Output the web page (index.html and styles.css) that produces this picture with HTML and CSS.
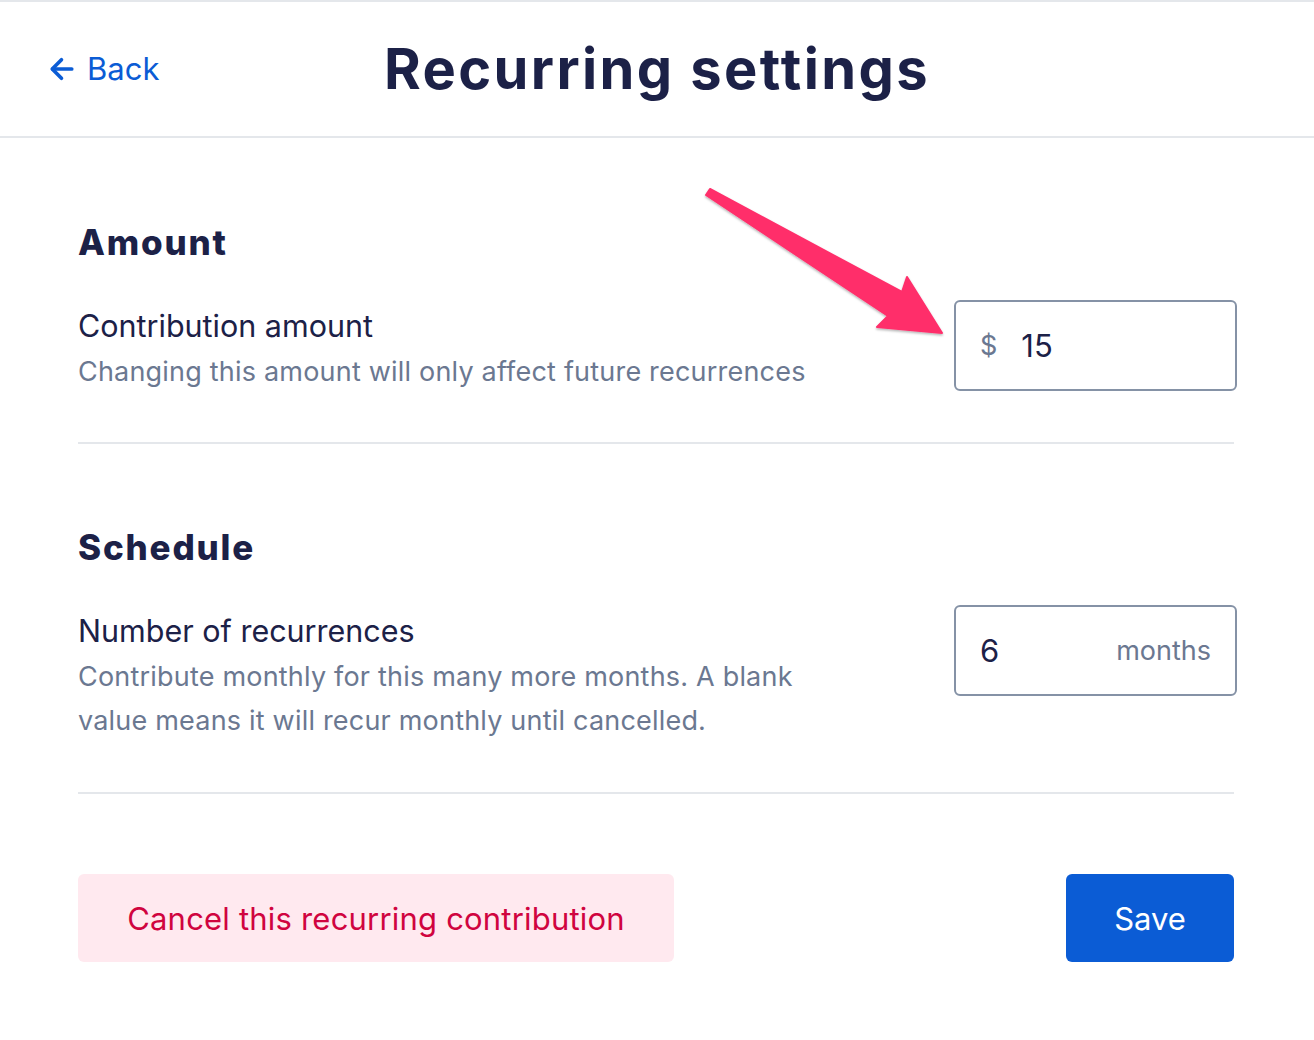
FILE: index.html
```html
<!DOCTYPE html>
<html lang="en">
<head>
  <meta charset="UTF-8">
  <meta name="viewport" content="width=device-width, initial-scale=1.0">
  <title>Recurring settings</title>
  <link rel="stylesheet" href="styles.css">
</head>
<body>
  <header class="topbar">
    <a class="back" href="#">
      <svg class="back-icon" width="26" height="26" viewBox="0 0 24 24" fill="none" stroke="currentColor" stroke-width="3.4" stroke-linecap="round" stroke-linejoin="round">
        <path d="M21 12H3.5"/>
        <path d="M11.5 3.5L3 12l8.5 8.5"/>
      </svg>
      Back
    </a>
    <h1 class="page-title">Recurring settings</h1>
  </header>

  <main class="content">
    <section class="section">
      <h2 class="section-title">Amount</h2>
      <div class="row">
        <div class="row-text">
          <div class="row-label">Contribution amount</div>
          <div class="row-help">Changing this amount will only affect future recurrences</div>
        </div>
        <div class="field">
          <span class="prefix">$</span>
          <input class="field-input" type="text" value="15">
        </div>
      </div>
    </section>

    <section class="section">
      <h2 class="section-title">Schedule</h2>
      <div class="row">
        <div class="row-text row-text-narrow">
          <div class="row-label">Number of recurrences</div>
          <div class="row-help">Contribute monthly for this many more months. A blank value means it will recur monthly until cancelled.</div>
        </div>
        <div class="field">
          <input class="field-input" type="text" value="6">
          <span class="suffix">months</span>
        </div>
      </div>
    </section>

    <div class="actions">
      <button class="btn btn-danger">Cancel this recurring contribution</button>
      <button class="btn btn-primary">Save</button>
    </div>
  </main>

  <!-- annotation arrow drawn over the page -->
  <svg class="annotation" width="1314" height="1040" viewBox="0 0 1314 1040">
    <defs>
      <filter id="shadow" x="-10%" y="-10%" width="120%" height="130%">
        <feDropShadow dx="0" dy="1.5" stdDeviation="1.2" flood-color="#000" flood-opacity="0.3"/>
      </filter>
    </defs>
    <polygon filter="url(#shadow)" fill="#ff2e6b" stroke="#ff2e6b" stroke-width="2" stroke-linejoin="round"
      points="710,189 902,292 907,277 942,333 877,327 888,316 706,195"/>
  </svg>
</body>
</html>
```

FILE: styles.css
```css
body {
  margin: 0;
  font-family: Inter, "Noto Sans", sans-serif;
  color: #1c2147;
  background-color: #fff;
  border-top: 2px solid #e4e7eb;
}

.topbar {
  position: relative;
  height: 134px;
  border-bottom: 2px solid #e4e7eb;
  display: flex;
  align-items: center;
  justify-content: center;
}

.back {
  position: absolute;
  left: 49px;
  top: 48px;
  display: flex;
  align-items: center;
  gap: 12px;
  color: #0b5cd5;
  text-decoration: none;
  font-size: 31px;
}

.back-icon {
  margin-top: 1px;
}

.page-title {
  margin: 0;
  font-size: 56px;
  font-weight: 700;
  letter-spacing: 2.4px;
  color: #1c2147;
}

.content {
  padding: 0 80px 0 78px;
}

.section {
  border-bottom: 2px solid #e4e7eb;
}

.section:first-child {
  padding-top: 82px;
  padding-bottom: 48px;
}

.section + .section {
  padding-top: 81px;
  padding-bottom: 49px;
}

.section-title {
  margin: 0 0 40px;
  font-size: 35px;
  font-weight: 800;
  line-height: 44px;
  letter-spacing: 1.8px;
}

.row {
  display: flex;
  justify-content: space-between;
  align-items: flex-start;
}

.row-text {
  max-width: 820px;
}

.row-text-narrow {
  max-width: 760px;
}

.row-label {
  font-size: 30.5px;
  line-height: 44px;
}

.row-help {
  font-size: 27px;
  line-height: 44px;
  letter-spacing: 0.2px;
  color: #6b7891;
  margin-top: 2px;
}

.field {
  box-sizing: border-box;
  width: 283px;
  height: 91px;
  margin-right: -3px;
  margin-top: -4px;
  border: 2px solid #8592a6;
  border-radius: 6px;
  display: flex;
  align-items: center;
  padding: 0 24px;
  gap: 24px;
}

.prefix,
.suffix {
  font-size: 27px;
  color: #6b7891;
}

.field-input {
  flex: 1;
  min-width: 0;
  border: none;
  outline: none;
  padding: 0;
  font-family: inherit;
  font-size: 31px;
  color: #1c2147;
  background: transparent;
}

.actions {
  display: flex;
  justify-content: space-between;
  padding-top: 80px;
}

.btn {
  height: 88px;
  border: none;
  border-radius: 6px;
  font-family: inherit;
  font-size: 31px;
  cursor: pointer;
}

.btn-danger {
  width: 596px;
  background-color: #ffe9ef;
  color: #d0043f;
  letter-spacing: 0.2px;
}

.btn-primary {
  width: 168px;
  background-color: #0b5cd5;
  color: #fff;
}

.annotation {
  position: absolute;
  left: 0;
  top: 0;
  pointer-events: none;
}
```
